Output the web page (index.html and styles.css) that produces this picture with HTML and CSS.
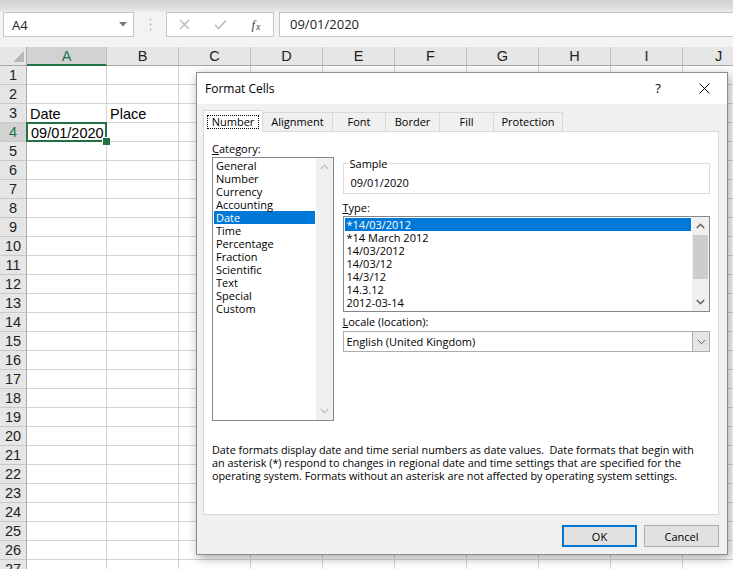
FILE: index.html
```html
<!DOCTYPE html>
<html>
<head>
<meta charset="utf-8">
<link rel="stylesheet" href="styles.css">
</head>
<body>
<div class="top"></div>
<div class="fbar">
  <div class="namebox"><span>A4</span><svg class="nbarrow" width="8" height="5" viewBox="0 0 8 5"><path d="M0 0H8L4 4.5Z" fill="#7a7a7a"/></svg></div>
  <div class="fdots"><svg width="3" height="13" viewBox="0 0 3 13"><circle cx="1.5" cy="1.5" r="1" fill="#b8b8b8"/><circle cx="1.5" cy="6.5" r="1" fill="#b8b8b8"/><circle cx="1.5" cy="11.5" r="1" fill="#b8b8b8"/></svg></div>
  <div class="fbtns">
    <span class="fb"><svg width="11" height="11" viewBox="0 0 11 11"><path d="M1 1L10 10M10 1L1 10" stroke="#b4b4b4" stroke-width="1.2"/></svg></span>
    <span class="fb"><svg width="13" height="11" viewBox="0 0 13 11"><path d="M1 6L4.5 9.5L12 1.5" stroke="#b4b4b4" stroke-width="1.3" fill="none"/></svg></span>
    <span class="fb fx"><i>f</i><i class="x">x</i></span>
  </div>
  <div class="finput">09/01/2020</div>
</div>

<div class="sheet">
  <div class="hrow">
    <div class="corner"><svg width="11" height="11" viewBox="0 0 11 11"><path d="M11 0V11H0Z" fill="#b8b8b8"/></svg></div>
    <div class="ch a sel">A</div><div class="ch">B</div><div class="ch">C</div><div class="ch">D</div><div class="ch">E</div><div class="ch">F</div><div class="ch">G</div><div class="ch">H</div><div class="ch">I</div><div class="ch">J</div>
  </div>
  <div class="row"><div class="rh">1</div><div class="c a"></div><div class="c"></div><div class="c"></div><div class="c"></div><div class="c"></div><div class="c"></div><div class="c"></div><div class="c"></div><div class="c"></div><div class="c"></div></div>
  <div class="row"><div class="rh">2</div><div class="c a"></div><div class="c"></div><div class="c"></div><div class="c"></div><div class="c"></div><div class="c"></div><div class="c"></div><div class="c"></div><div class="c"></div><div class="c"></div></div>
  <div class="row"><div class="rh">3</div><div class="c a">Date</div><div class="c">Place</div><div class="c"></div><div class="c"></div><div class="c"></div><div class="c"></div><div class="c"></div><div class="c"></div><div class="c"></div><div class="c"></div></div>
  <div class="row"><div class="rh sel">4</div><div class="c a sel"><span class="num">09/01/2020</span></div><div class="c"></div><div class="c"></div><div class="c"></div><div class="c"></div><div class="c"></div><div class="c"></div><div class="c"></div><div class="c"></div><div class="c"></div></div>
  <div class="row"><div class="rh">5</div><div class="c a"></div><div class="c"></div><div class="c"></div><div class="c"></div><div class="c"></div><div class="c"></div><div class="c"></div><div class="c"></div><div class="c"></div><div class="c"></div></div>
  <div class="row"><div class="rh">6</div><div class="c a"></div><div class="c"></div><div class="c"></div><div class="c"></div><div class="c"></div><div class="c"></div><div class="c"></div><div class="c"></div><div class="c"></div><div class="c"></div></div>
  <div class="row"><div class="rh">7</div><div class="c a"></div><div class="c"></div><div class="c"></div><div class="c"></div><div class="c"></div><div class="c"></div><div class="c"></div><div class="c"></div><div class="c"></div><div class="c"></div></div>
  <div class="row"><div class="rh">8</div><div class="c a"></div><div class="c"></div><div class="c"></div><div class="c"></div><div class="c"></div><div class="c"></div><div class="c"></div><div class="c"></div><div class="c"></div><div class="c"></div></div>
  <div class="row"><div class="rh">9</div><div class="c a"></div><div class="c"></div><div class="c"></div><div class="c"></div><div class="c"></div><div class="c"></div><div class="c"></div><div class="c"></div><div class="c"></div><div class="c"></div></div>
  <div class="row"><div class="rh">10</div><div class="c a"></div><div class="c"></div><div class="c"></div><div class="c"></div><div class="c"></div><div class="c"></div><div class="c"></div><div class="c"></div><div class="c"></div><div class="c"></div></div>
  <div class="row"><div class="rh">11</div><div class="c a"></div><div class="c"></div><div class="c"></div><div class="c"></div><div class="c"></div><div class="c"></div><div class="c"></div><div class="c"></div><div class="c"></div><div class="c"></div></div>
  <div class="row"><div class="rh">12</div><div class="c a"></div><div class="c"></div><div class="c"></div><div class="c"></div><div class="c"></div><div class="c"></div><div class="c"></div><div class="c"></div><div class="c"></div><div class="c"></div></div>
  <div class="row"><div class="rh">13</div><div class="c a"></div><div class="c"></div><div class="c"></div><div class="c"></div><div class="c"></div><div class="c"></div><div class="c"></div><div class="c"></div><div class="c"></div><div class="c"></div></div>
  <div class="row"><div class="rh">14</div><div class="c a"></div><div class="c"></div><div class="c"></div><div class="c"></div><div class="c"></div><div class="c"></div><div class="c"></div><div class="c"></div><div class="c"></div><div class="c"></div></div>
  <div class="row"><div class="rh">15</div><div class="c a"></div><div class="c"></div><div class="c"></div><div class="c"></div><div class="c"></div><div class="c"></div><div class="c"></div><div class="c"></div><div class="c"></div><div class="c"></div></div>
  <div class="row"><div class="rh">16</div><div class="c a"></div><div class="c"></div><div class="c"></div><div class="c"></div><div class="c"></div><div class="c"></div><div class="c"></div><div class="c"></div><div class="c"></div><div class="c"></div></div>
  <div class="row"><div class="rh">17</div><div class="c a"></div><div class="c"></div><div class="c"></div><div class="c"></div><div class="c"></div><div class="c"></div><div class="c"></div><div class="c"></div><div class="c"></div><div class="c"></div></div>
  <div class="row"><div class="rh">18</div><div class="c a"></div><div class="c"></div><div class="c"></div><div class="c"></div><div class="c"></div><div class="c"></div><div class="c"></div><div class="c"></div><div class="c"></div><div class="c"></div></div>
  <div class="row"><div class="rh">19</div><div class="c a"></div><div class="c"></div><div class="c"></div><div class="c"></div><div class="c"></div><div class="c"></div><div class="c"></div><div class="c"></div><div class="c"></div><div class="c"></div></div>
  <div class="row"><div class="rh">20</div><div class="c a"></div><div class="c"></div><div class="c"></div><div class="c"></div><div class="c"></div><div class="c"></div><div class="c"></div><div class="c"></div><div class="c"></div><div class="c"></div></div>
  <div class="row"><div class="rh">21</div><div class="c a"></div><div class="c"></div><div class="c"></div><div class="c"></div><div class="c"></div><div class="c"></div><div class="c"></div><div class="c"></div><div class="c"></div><div class="c"></div></div>
  <div class="row"><div class="rh">22</div><div class="c a"></div><div class="c"></div><div class="c"></div><div class="c"></div><div class="c"></div><div class="c"></div><div class="c"></div><div class="c"></div><div class="c"></div><div class="c"></div></div>
  <div class="row"><div class="rh">23</div><div class="c a"></div><div class="c"></div><div class="c"></div><div class="c"></div><div class="c"></div><div class="c"></div><div class="c"></div><div class="c"></div><div class="c"></div><div class="c"></div></div>
  <div class="row"><div class="rh">24</div><div class="c a"></div><div class="c"></div><div class="c"></div><div class="c"></div><div class="c"></div><div class="c"></div><div class="c"></div><div class="c"></div><div class="c"></div><div class="c"></div></div>
  <div class="row"><div class="rh">25</div><div class="c a"></div><div class="c"></div><div class="c"></div><div class="c"></div><div class="c"></div><div class="c"></div><div class="c"></div><div class="c"></div><div class="c"></div><div class="c"></div></div>
  <div class="row"><div class="rh">26</div><div class="c a"></div><div class="c"></div><div class="c"></div><div class="c"></div><div class="c"></div><div class="c"></div><div class="c"></div><div class="c"></div><div class="c"></div><div class="c"></div></div>
  <div class="row"><div class="rh">27</div><div class="c a"></div><div class="c"></div><div class="c"></div><div class="c"></div><div class="c"></div><div class="c"></div><div class="c"></div><div class="c"></div><div class="c"></div><div class="c"></div></div>
</div>

<div class="dialog">
  <div class="dtitle">
    <span class="dname">Format Cells</span>
    <div class="dctrl">
      <span class="cbtn help">?</span>
      <span class="cbtn"><svg width="11" height="11" viewBox="0 0 11 11"><path d="M0.5 0.5L10.5 10.5M10.5 0.5L0.5 10.5" stroke="#000" stroke-width="1"/></svg></span>
    </div>
  </div>
  <div class="dbody">
    <div class="tabs">
      <div class="tab on t1"><span class="focus">Number</span></div>
      <div class="tab t2">Alignment</div>
      <div class="tab t3">Font</div>
      <div class="tab t4">Border</div>
      <div class="tab t5">Fill</div>
      <div class="tab t6">Protection</div>
    </div>
    <div class="panel">
      <div class="cols">
        <div class="lcol">
          <div class="lbl"><u>C</u>ategory:</div>
          <div class="list cat">
            <div class="items">
              <div class="it">General</div>
              <div class="it">Number</div>
              <div class="it">Currency</div>
              <div class="it">Accounting</div>
              <div class="it hl">Date</div>
              <div class="it">Time</div>
              <div class="it">Percentage</div>
              <div class="it">Fraction</div>
              <div class="it">Scientific</div>
              <div class="it">Text</div>
              <div class="it">Special</div>
              <div class="it">Custom</div>
            </div>
            <div class="vscroll dis">
              <div class="sbtn"><svg width="9" height="6" viewBox="0 0 9 6"><path d="M0.8 5L4.5 1.3L8.2 5" stroke="#c4c4c4" stroke-width="1.5" fill="none"/></svg></div>
              <div class="strack"></div>
              <div class="sbtn"><svg width="9" height="6" viewBox="0 0 9 6"><path d="M0.8 1L4.5 4.7L8.2 1" stroke="#c4c4c4" stroke-width="1.5" fill="none"/></svg></div>
            </div>
          </div>
        </div>
        <div class="rcol">
          <div class="sample">
            <span class="leg">Sample</span>
            <div class="sval">09/01/2020</div>
          </div>
          <div class="lbl tlbl"><u>T</u>ype:</div>
          <div class="list type">
            <div class="items">
              <div class="it hl">*14/03/2012</div>
              <div class="it">*14 March 2012</div>
              <div class="it">14/03/2012</div>
              <div class="it">14/03/12</div>
              <div class="it">14/3/12</div>
              <div class="it">14.3.12</div>
              <div class="it">2012-03-14</div>
            </div>
            <div class="vscroll">
              <div class="sbtn up"><svg width="9" height="6" viewBox="0 0 9 6"><path d="M0.8 5L4.5 1.3L8.2 5" stroke="#606060" stroke-width="1.5" fill="none"/></svg></div>
              <div class="thumb"></div>
              <div class="strack"></div>
              <div class="sbtn dn"><svg width="9" height="6" viewBox="0 0 9 6"><path d="M0.8 1L4.5 4.7L8.2 1" stroke="#606060" stroke-width="1.5" fill="none"/></svg></div>
            </div>
          </div>
          <div class="lbl llbl"><u>L</u>ocale (location):</div>
          <div class="combo">
            <span class="cval">English (United Kingdom)</span>
            <span class="cdrop"><svg width="9" height="6" viewBox="0 0 9 6"><path d="M0.8 1L4.5 4.7L8.2 1" stroke="#606060" stroke-width="1" fill="none"/></svg></span>
          </div>
        </div>
      </div>
      <p class="desc">Date formats display date and time serial numbers as date values.&nbsp; Date formats that begin with<br>an asterisk (*) respond to changes in regional date and time settings that are specified for the<br>operating system. Formats without an asterisk are not affected by operating system settings.</p>
    </div>
    <div class="btns">
      <button class="btn ok">OK</button>
      <button class="btn">Cancel</button>
    </div>
  </div>
</div>
</body>
</html>
```
FILE: styles.css
```css
* { box-sizing: border-box; }
html, body { margin: 0; padding: 0; }
body {
  width: 733px;
  height: 569px;
  overflow: hidden;
  position: relative;
  background: #f3f3f3;
  font-family: "Liberation Sans", Arial, sans-serif;
  color: #000;
}

/* ribbon edge + formula bar */
.top { height: 12px; background: linear-gradient(#d2d2d2, #dcdcdc 60%, #ececec); }
.fbar {
  height: 35px;
  display: flex;
  align-items: flex-start;
  padding-left: 3px;
  background: #f3f3f3;
  font-family: "Open Sans", "Noto Sans", sans-serif;
  font-size: 13px;
  color: #222;
}
.namebox {
  width: 131px;
  height: 25px;
  background: #fff;
  border: 1px solid #c6c6c6;
  display: flex;
  align-items: center;
  justify-content: space-between;
  padding: 0 6px 0 8px;
}
.fdots { width: 32px; height: 25px; display: flex; align-items: center; justify-content: center; }
.fbtns {
  width: 108px;
  height: 25px;
  background: #fff;
  border: 1px solid #c6c6c6;
  display: grid;
  grid-template-columns: 35px 37px 34px;
  align-items: center;
  justify-items: center;
}
.fb { display: flex; align-items: center; justify-content: center; }
.fx { font-family: "Liberation Serif", serif; font-size: 13px; color: #444; }
.fx i { font-style: italic; }
.fx .x { font-size: 10px; margin-left: 1px; margin-top: 3px; }
.finput {
  flex: 1;
  margin-left: 5px;
  height: 25px;
  background: #fff;
  border: 1px solid #c6c6c6;
  border-right: none;
  padding-left: 10px;
  line-height: 23px;
}

/* sheet */
.sheet { background: #fff; overflow: hidden; }
.hrow, .row { display: flex; height: 19px; }
.corner {
  flex: 0 0 27px;
  background: #e6e6e6;
  border-right: 1px solid #ababab;
  border-bottom: 1px solid #ababab;
  display: flex;
  align-items: flex-end;
  justify-content: flex-end;
  padding: 0 2px 3px 0;
}
.ch {
  flex: 0 0 72px;
  background: #e6e6e6;
  border-right: 1px solid #bdbdbd;
  border-bottom: 1px solid #ababab;
  text-align: center;
  font-size: 14.5px;
  line-height: 18px;
  color: #222;
}
.ch.a { flex-basis: 80px; }
.ch.sel { background: #d2d2d2; color: #217346; border-bottom: 2px solid #217346; }
.rh {
  flex: 0 0 27px;
  background: #e6e6e6;
  border-right: 1px solid #ababab;
  border-bottom: 1px solid #c8c8c8;
  text-align: center;
  font-size: 14.5px;
  line-height: 19px;
  color: #222;
}
.rh.sel { background: #d2d2d2; color: #217346; }
.c {
  flex: 0 0 72px;
  border-right: 1px solid #d4d4d4;
  border-bottom: 1px solid #d4d4d4;
  font-size: 14.5px;
  padding: 2px 0 0 3px;
  line-height: 17px;
  white-space: nowrap;
}
.c.a { flex-basis: 80px; }
.num { padding-left: 1px; }
.c.sel { position: relative; }
.c.sel::after {
  content: "";
  position: absolute;
  left: -1px; top: -1px; right: -1px; bottom: -1px;
  border: 2px solid #217346;
}
.c.sel::before {
  content: "";
  position: absolute;
  right: -4px; bottom: -4px;
  width: 7px; height: 7px;
  background: #217346;
  border-left: 1px solid #fff;
  border-top: 1px solid #fff;
  z-index: 1;
}

/* dialog */
.dialog {
  position: absolute;
  left: 196px;
  top: 72px;
  width: 532px;
  height: 483px;
  background: #f0f0f0;
  border: 1px solid #8c8c8c;
  box-shadow: 2px 3px 10px rgba(0, 0, 0, 0.35);
  font-family: "Open Sans", "Noto Sans", sans-serif;
  font-size: 11px;
  color: #000;
}
.dtitle {
  height: 31px;
  background: #fff;
  display: flex;
  align-items: center;
  justify-content: space-between;
  padding-left: 8px;
  padding-bottom: 1px;
}
.dname { font-size: 12px; }
.dctrl { display: flex; height: 30px; }
.cbtn { width: 46px; display: flex; align-items: center; justify-content: center; }
.help { font-size: 13px; }
.dbody { padding: 6px 8px 0 6px; }
.tabs { display: flex; align-items: flex-end; height: 21px; }
.tab {
  height: 19px;
  line-height: 18px;
  text-align: center;
  background: #f0f0f0;
  border: 1px solid #d9d9d9;
  border-bottom: none;
  border-left: none;
}
.tab.on {
  height: 22px;
  margin-bottom: -1px;
  background: #fff;
  border-left: 1px solid #d9d9d9;
  padding: 4px 3px 0 3px;
  position: relative;
}
.focus { display: block; border: 1px dotted #000; height: 14px; line-height: 12px; }
.t1 { width: 60px; }
.t2 { width: 70px; }
.t3 { width: 53px; }
.t4 { width: 54px; }
.t5 { width: 54px; }
.t6 { width: 69px; }

.panel {
  height: 384px;
  background: #fff;
  border: 1px solid #d9d9d9;
  padding: 10px 8px 0 8px;
}
.cols { display: flex; gap: 9px; }
.lcol { width: 122px; }
.rcol { width: 369px; padding-top: 21px; }
.lbl { line-height: 13px; height: 13px; }
.list {
  margin-top: 2px;
  border: 1px solid #828790;
  background: #fff;
  display: flex;
}
.list.cat { height: 264px; }
.list.type { height: 96px; }
.items { flex: 1; padding: 1px; }
.it { line-height: 13px; height: 13px; padding-left: 2px; white-space: nowrap; }
.it.hl { background: #0078d7; color: #fff; }
.vscroll { width: 17px; background: #f0f0f0; display: flex; flex-direction: column; }
.sbtn { height: 18px; display: flex; align-items: center; justify-content: center; }
.strack { flex: 1; }
.thumb { height: 44px; margin: 0 1px 0 1px; background: #cdcdcd; }

.sample { border: 1px solid #dcdcdc; height: 31px; padding-left: 5px; }
.leg { display: block; width: max-content; margin-top: -7px; background: #fff; padding: 0 1px; line-height: 13px; }
.sval { margin-top: 6px; padding-left: 2px; line-height: 13px; }
.tlbl { margin-top: 7px; }
.llbl { margin-top: 3px; }
.combo {
  margin-top: 3px;
  height: 21px;
  border: 1px solid #adadad;
  background: #fff;
  display: flex;
}
.cval { flex: 1; padding-left: 3px; line-height: 19px; }
.cdrop {
  width: 17px;
  background: #e5e5e5;
  border-left: 1px solid #adadad;
  display: flex;
  align-items: center;
  justify-content: center;
}
.desc { margin: 22px 0 0 0; line-height: 13px; white-space: nowrap; font-size: 10.8px; }

.btns { display: flex; justify-content: flex-end; gap: 7px; margin-top: 10px; }
.btn {
  width: 75px;
  height: 22px;
  background: #e1e1e1;
  border: 1px solid #adadad;
  font-family: "Open Sans", "Noto Sans", sans-serif;
  font-size: 11px;
  color: #000;
  padding: 0;
}
.btn.ok { border: 2px solid #0078d7; }
```
